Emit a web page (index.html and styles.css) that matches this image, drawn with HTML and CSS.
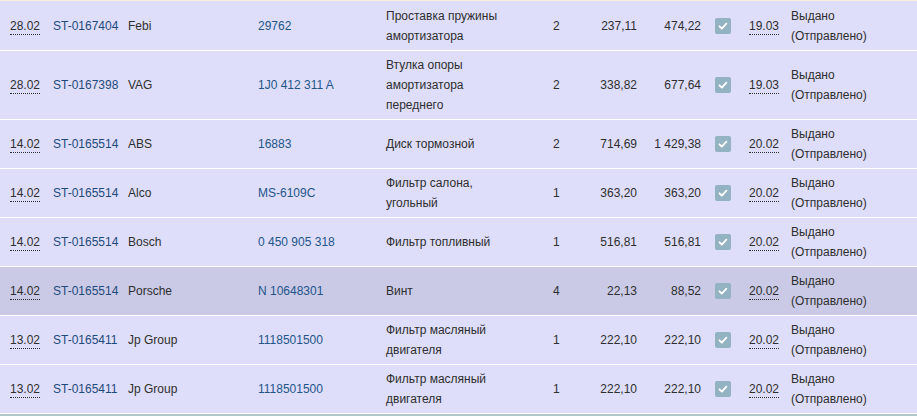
FILE: index.html
```html
<!DOCTYPE html>
<html lang="ru">
<head>
<meta charset="utf-8">
<link rel="stylesheet" href="styles.css">
</head>
<body>
<table class="orders">
  <colgroup>
    <col class="c-date"><col class="c-num"><col class="c-brand"><col class="c-art"><col class="c-desc"><col class="c-qty"><col class="c-price"><col class="c-sum"><col class="c-chk"><col class="c-date2"><col class="c-status">
  </colgroup>
  <tbody>
    <tr class="first">
      <td class="date"><span class="dot">28.02</span></td><td class="num">ST-0167404</td><td>Febi</td><td class="art">29762</td>
      <td class="desc">Проставка пружины амортизатора</td><td class="qty">2</td><td class="money">237,11</td><td class="money">474,22</td>
      <td class="chk"><span class="box"><svg viewBox="0 0 16 16" width="16" height="16"><path d="M4.5 8.3l2.3 2.3 4.6-5" fill="none" stroke="#fff" stroke-width="1.8" stroke-linecap="round" stroke-linejoin="round"/></svg></span></td>
      <td class="date2"><span class="dot">19.03</span></td><td class="status">Выдано<br>(Отправлено)</td>
    </tr>
    <tr>
      <td class="date"><span class="dot">28.02</span></td><td class="num">ST-0167398</td><td>VAG</td><td class="art">1J0 412 311 A</td>
      <td class="desc">Втулка опоры амортизатора переднего</td><td class="qty">2</td><td class="money">338,82</td><td class="money">677,64</td>
      <td class="chk"><span class="box"><svg viewBox="0 0 16 16" width="16" height="16"><path d="M4.5 8.3l2.3 2.3 4.6-5" fill="none" stroke="#fff" stroke-width="1.8" stroke-linecap="round" stroke-linejoin="round"/></svg></span></td>
      <td class="date2"><span class="dot">19.03</span></td><td class="status">Выдано<br>(Отправлено)</td>
    </tr>
    <tr>
      <td class="date"><span class="dot">14.02</span></td><td class="num">ST-0165514</td><td>ABS</td><td class="art">16883</td>
      <td class="desc">Диск тормозной</td><td class="qty">2</td><td class="money">714,69</td><td class="money">1 429,38</td>
      <td class="chk"><span class="box"><svg viewBox="0 0 16 16" width="16" height="16"><path d="M4.5 8.3l2.3 2.3 4.6-5" fill="none" stroke="#fff" stroke-width="1.8" stroke-linecap="round" stroke-linejoin="round"/></svg></span></td>
      <td class="date2"><span class="dot">20.02</span></td><td class="status">Выдано<br>(Отправлено)</td>
    </tr>
    <tr>
      <td class="date"><span class="dot">14.02</span></td><td class="num">ST-0165514</td><td>Alco</td><td class="art">MS-6109C</td>
      <td class="desc">Фильтр салона, угольный</td><td class="qty">1</td><td class="money">363,20</td><td class="money">363,20</td>
      <td class="chk"><span class="box"><svg viewBox="0 0 16 16" width="16" height="16"><path d="M4.5 8.3l2.3 2.3 4.6-5" fill="none" stroke="#fff" stroke-width="1.8" stroke-linecap="round" stroke-linejoin="round"/></svg></span></td>
      <td class="date2"><span class="dot">20.02</span></td><td class="status">Выдано<br>(Отправлено)</td>
    </tr>
    <tr>
      <td class="date"><span class="dot">14.02</span></td><td class="num">ST-0165514</td><td>Bosch</td><td class="art">0 450 905 318</td>
      <td class="desc">Фильтр топливный</td><td class="qty">1</td><td class="money">516,81</td><td class="money">516,81</td>
      <td class="chk"><span class="box"><svg viewBox="0 0 16 16" width="16" height="16"><path d="M4.5 8.3l2.3 2.3 4.6-5" fill="none" stroke="#fff" stroke-width="1.8" stroke-linecap="round" stroke-linejoin="round"/></svg></span></td>
      <td class="date2"><span class="dot">20.02</span></td><td class="status">Выдано<br>(Отправлено)</td>
    </tr>
    <tr class="hl">
      <td class="date"><span class="dot">14.02</span></td><td class="num">ST-0165514</td><td>Porsche</td><td class="art">N 10648301</td>
      <td class="desc">Винт</td><td class="qty">4</td><td class="money">22,13</td><td class="money">88,52</td>
      <td class="chk"><span class="box"><svg viewBox="0 0 16 16" width="16" height="16"><path d="M4.5 8.3l2.3 2.3 4.6-5" fill="none" stroke="#fff" stroke-width="1.8" stroke-linecap="round" stroke-linejoin="round"/></svg></span></td>
      <td class="date2"><span class="dot">20.02</span></td><td class="status">Выдано<br>(Отправлено)</td>
    </tr>
    <tr>
      <td class="date"><span class="dot">13.02</span></td><td class="num">ST-0165411</td><td>Jp Group</td><td class="art">1118501500</td>
      <td class="desc">Фильтр масляный двигателя</td><td class="qty">1</td><td class="money">222,10</td><td class="money">222,10</td>
      <td class="chk"><span class="box"><svg viewBox="0 0 16 16" width="16" height="16"><path d="M4.5 8.3l2.3 2.3 4.6-5" fill="none" stroke="#fff" stroke-width="1.8" stroke-linecap="round" stroke-linejoin="round"/></svg></span></td>
      <td class="date2"><span class="dot">20.02</span></td><td class="status">Выдано<br>(Отправлено)</td>
    </tr>
    <tr>
      <td class="date"><span class="dot">13.02</span></td><td class="num">ST-0165411</td><td>Jp Group</td><td class="art">1118501500</td>
      <td class="desc">Фильтр масляный двигателя</td><td class="qty">1</td><td class="money">222,10</td><td class="money">222,10</td>
      <td class="chk"><span class="box"><svg viewBox="0 0 16 16" width="16" height="16"><path d="M4.5 8.3l2.3 2.3 4.6-5" fill="none" stroke="#fff" stroke-width="1.8" stroke-linecap="round" stroke-linejoin="round"/></svg></span></td>
      <td class="date2"><span class="dot">20.02</span></td><td class="status">Выдано<br>(Отправлено)</td>
    </tr>
  </tbody>
</table>
<div class="footer-band"></div>
</body>
</html>
```
FILE: styles.css
```css
html, body {
  margin: 0;
  padding: 0;
  background: #ffffff;
}
body {
  font-family: "Liberation Sans", Arial, sans-serif;
  font-size: 12px;
  color: #2e2e2e;
  width: 917px;
}
.orders {
  width: 917px;
  border-collapse: collapse;
  table-layout: fixed;
  border-top: 1px solid #f8ecdc;
}
.c-date { width: 48px; }
.c-num { width: 75px; }
.c-brand { width: 130px; }
.c-art { width: 128px; }
.c-desc { width: 167px; }
.c-qty { width: 32px; }
.c-price { width: 62px; }
.c-sum { width: 64px; }
.c-chk { width: 38px; }
.c-date2 { width: 42px; }
.c-status { width: 131px; }
.orders td {
  background: #dedefa;
  border-bottom: 1px solid #ffffff;
  padding: 4px 5px;
  line-height: 20px;
  vertical-align: middle;
  white-space: nowrap;
}
.orders tr.first td { padding-top: 5px; }
.orders tr.hl td { background: #cacae6; }
.orders td.date { padding-left: 10px; padding-right: 0; }
.orders td.num { color: #1e4a7c; }
.orders td.art { color: #23558a; }
.orders td.desc { white-space: normal; padding-right: 37px; }
.orders td.money { text-align: right; }
.orders td.chk { padding-left: 9px; }
.orders td.date2 { padding-left: 5px; padding-right: 0; }
.dot {
  border-bottom: 1px dotted #2e2e2e;
  padding-bottom: 1px;
}
.box {
  display: block;
  width: 16px;
  height: 16px;
  border-radius: 2px;
  background: #93b3c2;
}
.box svg { display: block; }
.footer-band {
  height: 3px;
  background: #b3c6cd;
}
```
